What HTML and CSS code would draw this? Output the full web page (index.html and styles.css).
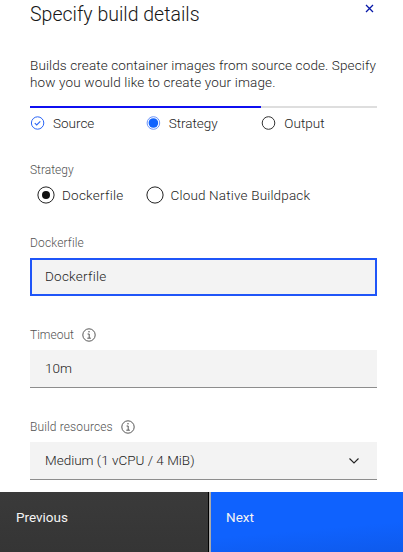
FILE: index.html
```
<!DOCTYPE html>
<html lang="en">
<head>
<meta charset="utf-8">
<title>Specify build details</title>
<link rel="stylesheet" href="styles.css">
</head>
<body>
<main class="panel">
  <header class="header">
    <h1 class="title">Specify build details</h1>
    <button class="close" aria-label="Close"><svg width="9" height="9" viewBox="0 0 9 9"><path d="M1 1l7 7M8 1L1 8" stroke="#0718a8" stroke-width="1.3"/></svg></button>
  </header>
  <p class="intro"><span class="line-a">Builds create container images from source code. Specify</span><br><span class="line-b">how you would like to create your image.</span></p>
  <ol class="steps">
    <li class="step done"><svg class="step-icon" width="15" height="14" viewBox="0 0 15 14" fill="none" stroke="#2b66f6"><circle cx="7.6" cy="7" r="6.2"/><path d="M4.8 7.2l1.9 1.8 3.6-3.7" stroke-width="1.1"/></svg><span>Source</span></li>
    <li class="step done"><svg class="step-icon" width="15" height="14" viewBox="0 0 15 14"><circle cx="7.4" cy="7" r="6.3" fill="#fff" stroke="#5c88f8" stroke-width=".9"/><circle cx="7.4" cy="7" r="4.8" fill="#0f62fe"/></svg><span>Strategy</span></li>
    <li class="step"><svg class="step-icon" width="15" height="14" viewBox="0 0 15 14" fill="none" stroke="#333"><circle cx="7.5" cy="7" r="6.3"/></svg><span>Output</span></li>
  </ol>
  <div class="label">Strategy</div>
  <div class="radios">
    <label class="radio"><svg width="18" height="18" viewBox="0 0 18 18"><circle cx="9" cy="9" r="8.1" fill="none" stroke="#222"/><circle cx="9" cy="9" r="4" fill="#111"/></svg><span class="r-docker">Dockerfile</span></label>
    <label class="radio"><svg width="18" height="18" viewBox="0 0 18 18"><circle cx="9" cy="9" r="8.1" fill="none" stroke="#222"/></svg><span class="r-cloud">Cloud Native Buildpack</span></label>
  </div>
  <section class="field">
    <div class="label"><span class="l-docker">Dockerfile</span></div>
    <div class="control focused"><span class="r-docker">Dockerfile</span></div>
  </section>
  <section class="field">
    <div class="label"><span>Timeout</span><svg class="info" width="14" height="14" viewBox="0 0 14 14" fill="none" stroke="#444"><circle cx="7" cy="7" r="6.2" stroke-width=".9"/><path d="M5.6 6h1.6v4M5.3 10.2h3.6" stroke-width=".9"/><circle cx="7" cy="3.8" r=".7" fill="#444" stroke="none"/></svg></div>
    <div class="control"><span>10m</span></div>
  </section>
  <section class="field">
    <div class="label"><span class="l-build">Build resources</span><svg class="info" width="14" height="14" viewBox="0 0 14 14" fill="none" stroke="#444"><circle cx="7" cy="7" r="6.2" stroke-width=".9"/><path d="M5.6 6h1.6v4M5.3 10.2h3.6" stroke-width=".9"/><circle cx="7" cy="3.8" r=".7" fill="#444" stroke="none"/></svg></div>
    <div class="control"><span>Medium (1 vCPU / 4 MiB)</span><svg class="chevron" width="10" height="6" viewBox="0 0 10 6"><path d="M.5.5L5 5 9.5.5" fill="none" stroke="#222" stroke-width="1.1"/></svg></div>
  </section>
</main>
<footer class="actions">
  <button class="previous"><span>Previous</span></button>
  <button class="next"><span>Next</span></button>
</footer>
</body>
</html>
```
FILE: styles.css
```
* { box-sizing: border-box; }
body {
  margin: 0;
  height: 552px;
  overflow: hidden;
  display: flex;
  flex-direction: column;
  background: #fff;
  color: #242424;
  font: 300 13.5px/17px "Roboto", sans-serif;
}
.panel { height: 492px; padding: 0 26px 0 30px; }
.header { display: flex; justify-content: space-between; height: 57px; }
.title { margin: 3px 0 0; font-size: 19.5px; line-height: 24px; font-weight: 300; color: #161616; white-space: nowrap; }
button { border: 0; padding: 0; margin: 0; font: inherit; text-align: left; }
.close { display: flex; align-items: flex-start; background: none; padding: 4px 3px 0 0; height: 20px; }
.intro { margin: 0; height: 49px; white-space: nowrap; }
.line-a { letter-spacing: .12px; }
.line-b { letter-spacing: .16px; }
.steps { display: grid; grid-template-columns: repeat(3, 1fr); list-style: none; width: 347px; height: 55px; margin: 0; padding: 0; }
.step { display: flex; align-items: flex-start; gap: 8px; border-top: 2px solid #dedede; padding-top: 7px; }
.step.done { border-color: #0f0ff0; }
.step-icon { margin-top: 1px; }
.label { display: flex; align-items: center; height: 18px; font-size: 12px; color: #525252; }
.l-docker { letter-spacing: .15px; }
.l-build { letter-spacing: .13px; }
.info { margin-left: 8px; }
.radios { display: flex; gap: 22px; height: 55px; padding: 7px 0 0 7px; }
.radio { display: flex; align-items: center; height: 18px; gap: 7px; }
.r-docker { letter-spacing: .25px; }
.r-cloud { letter-spacing: .17px; }
.field { width: 347px; height: 92px; }
.control { display: flex; align-items: center; justify-content: space-between; height: 38px; margin-top: 6px; padding: 0 18px 0 15px; background: #f3f3f3; border-bottom: 1px solid #8d8d8d; }
.focused { border: 2px solid #1f55f8; padding-left: 13px; padding-bottom: 1px; }
.actions { display: flex; height: 60px; font-weight: 400; }
.previous, .next { display: flex; align-items: flex-start; padding: 17px 16px 0; color: #f4f4f4; }
.previous { width: 211px; background: linear-gradient(#3a3a3a, #353535); border-right: 2px solid #aaa; box-shadow: inset -1px 0 #000; }
.next { flex: 1; padding-left: 15px; background: linear-gradient(175deg, #0f62fe 60%, #0e5aec); }
```
